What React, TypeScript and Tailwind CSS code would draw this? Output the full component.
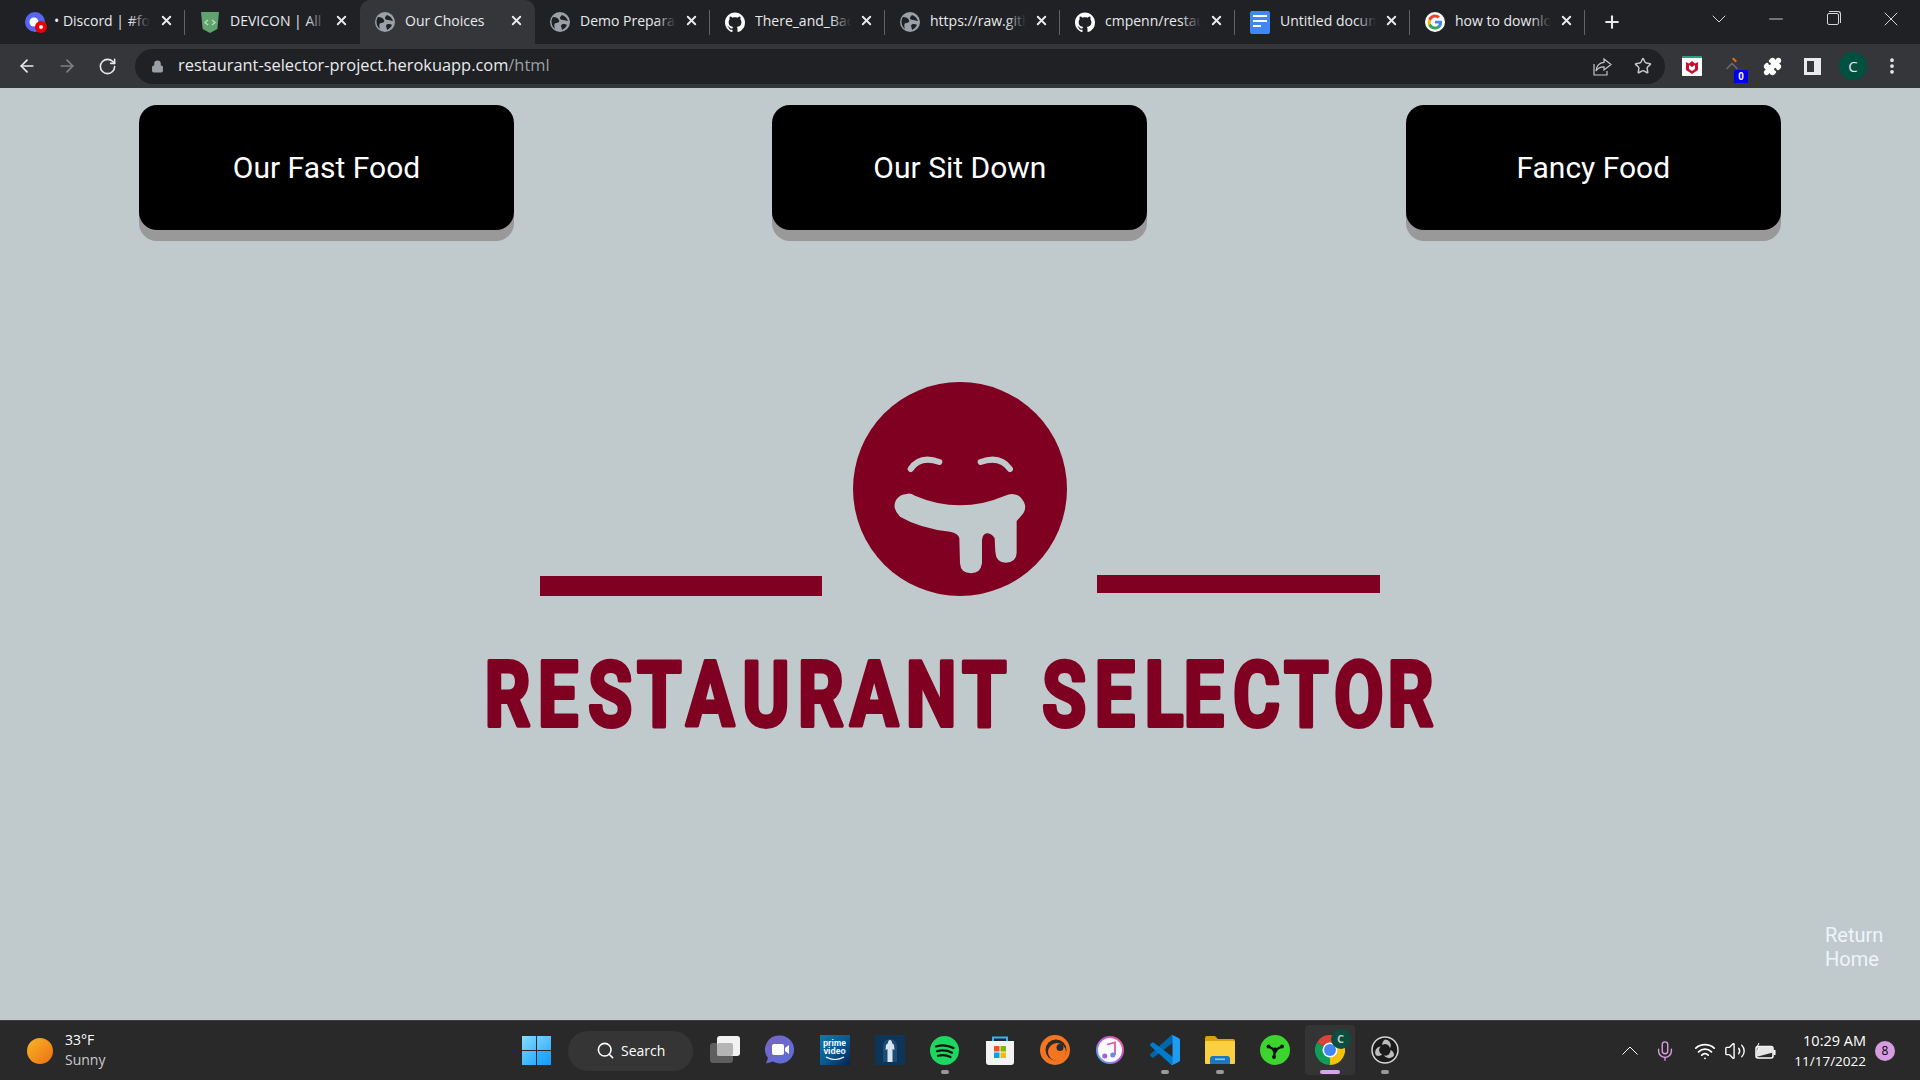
import type { ReactNode } from "react";
import { ArrowLeft, ArrowRight, RotateCw, Lock, Star, Puzzle, X, Plus, ChevronDown, ChevronUp, Minus, Search, Mic, Wifi, Volume2, EllipsisVertical } from "lucide-react";

const ui = "font-['Open_Sans',sans-serif]";

function Globe() {
  return (
    <svg width="20" height="20" viewBox="0 0 20 20">
      <circle cx="10" cy="10" r="10" fill="#9aa0a6" />
      <path d="M3 5c3 0 5 1 6 3s-1 3-3 3-2 3-1 6C2 15 0 9 3 5zM12 3c3 1 5 3 6 6-2 0-3-1-5-1s-3-1-3-2 1-2 2-3zM13 12c2 0 3 0 4 1-1 2-3 4-5 5 0-2-1-3-1-4s1-2 2-2z" fill="#202124" />
    </svg>
  );
}

function Github() {
  return (
    <svg width="21" height="21" viewBox="0 0 16 16" fill="#fff">
      <path d="M8 0C3.58 0 0 3.58 0 8c0 3.54 2.29 6.53 5.47 7.59.4.07.55-.17.55-.38 0-.19-.01-.82-.01-1.49-2.01.37-2.53-.49-2.69-.94-.09-.23-.48-.94-.82-1.13-.28-.15-.68-.52-.01-.53.63-.01 1.08.58 1.23.82.72 1.21 1.87.87 2.33.66.07-.52.28-.87.51-1.07-1.78-.2-3.64-.89-3.64-3.95 0-.87.31-1.59.82-2.15-.08-.2-.36-1.02.08-2.12 0 0 .67-.21 2.2.82.64-.18 1.32-.27 2-.27s1.36.09 2 .27c1.53-1.04 2.2-.82 2.2-.82.44 1.1.16 1.92.08 2.12.51.56.82 1.27.82 2.15 0 3.07-1.87 3.75-3.65 3.95.29.25.54.73.54 1.48 0 1.07-.01 1.93-.01 2.2 0 .21.15.46.55.38A8.01 8.01 0 0 0 16 8c0-4.42-3.58-8-8-8z" />
    </svg>
  );
}

function GoogleG() {
  return (
    <svg width="20" height="20" viewBox="0 0 48 48">
      <circle cx="24" cy="24" r="24" fill="#fff" />
      <path fill="#4285f4" d="M41 24.500c0-1.300-.1-2.500-.3-3.700H24v7h9.600c-.4 2.200-1.700 4.100-3.500 5.400v4.500h5.700c3.300-3.100 5.200-7.600 5.200-13.200z" />
      <path fill="#34a853" d="M24 42c4.700 0 8.700-1.600 11.700-4.300l-5.700-4.400c-1.600 1.100-3.600 1.700-6 1.700-4.600 0-8.500-3.100-9.900-7.300H8.200v4.600C11.100 38 17.100 42 24 42z" />
      <path fill="#fbbc05" d="M14.100 27.700c-.7-2.200-.7-4.600 0-6.800v-4.600H8.200a18 18 0 0 0 0 16z" />
      <path fill="#ea4335" d="M24 13.200c2.600 0 4.900.9 6.700 2.600l5-5C32.700 7.900 28.700 6 24 6 17.100 6 11.100 10 8.200 16.300l5.900 4.600c1.400-4.200 5.300-7.700 9.900-7.700z" />
    </svg>
  );
}

function Discord() {
  return (
    <div className="relative w-5 h-5">
      <svg width="20" height="20" viewBox="0 0 20 20">
        <circle cx="10" cy="10" r="10" fill="#5865f2" />
        <circle cx="9" cy="10" r="4.500" fill="#fff" />
      </svg>
      <span className="absolute right-[-2px] bottom-[-1px] w-3 h-3 rounded-full bg-[#e00] flex items-center justify-center">
        <span className="w-1 h-1 rounded-full bg-white" />
      </span>
    </div>
  );
}

function Devicon() {
  return (
    <svg width="20" height="21" viewBox="0 0 20 21">
      <path d="M1 0h18l-1.600 17L10 21l-7.400-4z" fill="#60a36f" />
      <path d="M8 8l-3 2.500L8 13M12 8l3 2.500L12 13" stroke="#b9dcc0" strokeWidth="1.400" fill="none" />
    </svg>
  );
}

function Docs() {
  return (
    <div className="w-5 h-[23px] rounded-[2px] bg-[#4285f4] flex flex-col gap-[3px] px-[3px] pt-1">
      <span className="h-[2px] bg-white" />
      <span className="h-[2px] bg-white" />
      <span className="h-[2px] w-2 bg-white" />
    </div>
  );
}

const tabs = [
  { title: "• Discord | #fo", icon: <Discord />, first: true },
  { title: "DEVICON | All", icon: <Devicon /> },
  { title: "Our Choices", icon: <Globe />, active: true },
  { title: "Demo Prepara", icon: <Globe /> },
  { title: "There_and_Back", icon: <Github /> },
  { title: "https://raw.gith", icon: <Globe /> },
  { title: "cmpenn/restau", icon: <Github /> },
  { title: "Untitled docum", icon: <Docs /> },
  { title: "how to downlo", icon: <GoogleG /> },
];

function TabBar() {
  return (
    <div className="h-[44px] bg-[#202124] flex items-stretch pl-[10px] text-[#e8eaed]">
      {tabs.map((t, i) => (
        <div
          key={t.title}
          className={
            t.active
              ? "relative w-[175px] flex items-center pl-[15px] bg-[#35363a] rounded-t-[10px]"
              : "relative w-[175px] flex items-center pl-[15px]"
          }
        >
          <div className="w-5 flex justify-center shrink-0">{t.icon}</div>
          <div className={`relative w-[96px] -mt-[3px] overflow-hidden whitespace-nowrap text-[14px] ${t.first ? "ml-[9px]" : "ml-[10px]"} ${ui}`}>
            {t.title}
            {!t.active && (
              <span className="absolute right-0 top-0 bottom-0 w-5 bg-gradient-to-r from-transparent to-[#202124]" />
            )}
          </div>
          <X size={15} strokeWidth={3} className="absolute left-[149px] top-[13px] text-[#e8eaed]" />
          {i !== 1 && i !== 2 && (
            <span className="absolute right-0 top-[10px] h-[25px] w-px bg-[#5f6368]" />
          )}
        </div>
      ))}
      <div className="ml-[17px] flex items-center">
        <Plus size={20} strokeWidth={2.5} />
      </div>
      <div className="ml-auto flex items-center text-[#d5d6d8]">
        <ChevronDown size={24} strokeWidth={1} className="mr-[34px] -mt-[6px]" />
        <Minus size={22} strokeWidth={1} className="mr-[40px] -mt-[6px]" />
        <div className="relative w-[12px] h-[12px] border border-[#d5d6d8] rounded-[2px] mr-[40px] -mt-[6px]">
          <span className="absolute -top-[3px] left-[1px] w-[12px] h-[12px] border-t border-r border-[#d5d6d8] rounded-tr-[3px]" />
        </div>
        <X size={24} strokeWidth={1} className="mr-[17px] -mt-[6px]" />
      </div>
    </div>
  );
}

function ToolBar() {
  return (
    <div className="h-[44px] bg-[#35363a] flex items-center text-[#e8eaed]">
      <div className="w-[135px] flex items-center pl-[17px] gap-[20px]">
        <ArrowLeft size={20} />
        <ArrowRight size={20} className="text-[#7d8084]" />
        <RotateCw size={19} className="ml-[1px]" />
      </div>
      <div className="w-[1530px] h-[35px] rounded-full bg-[#202124] flex items-center pl-[16px] pr-[13px]">
        <Lock size={13} fill="#9aa0a6" className="text-[#9aa0a6]" />
        <div className={`ml-[14px] -mt-[1px] text-[16.4px] ${ui}`}>
          restaurant-selector-project.herokuapp.com<span className="text-[#9aa0a6]">/html</span>
        </div>
        <div className="ml-auto flex items-center gap-[22px] text-[#c4c7c5]">
          <svg width="19" height="19" viewBox="0 0 19 19" fill="none" stroke="currentColor" strokeWidth="1.200">
            <path d="M1 7v11h13v-4" />
            <path d="M11 2l7 5.500-7 5.500V9.800C7 9.800 4.500 11 3 14c.5-5 3.500-8.200 8-8.600z" />
          </svg>
          <Star size={18} />
        </div>
      </div>
      <div className="flex-1 flex items-center pl-[17px] relative">
        <div className="w-5 h-5 bg-white border-t-2 border-[#2e9f7f] flex items-center justify-center rounded-[1px]">
          <svg width="12" height="13" viewBox="0 0 12 13">
            <path d="M0 1l3 1.500L6 0l3 2.500L12 1v8l-6 4-6-4z" fill="#c8102e" />
            <path d="M3 4l3 2 3-2v4l-3 2-3-2z" fill="#fff" />
          </svg>
        </div>
        <div className="relative w-5 h-5 ml-[20px]">
          <ChevronUp size={20} className="text-[#6a6c70]" />
          <span className="absolute left-[10px] top-[3px] w-[5px] h-[2px] rotate-45 bg-[#e8681e]" />
          <span className="absolute right-[-6px] bottom-[-7px] w-[14px] h-[13px] bg-[#0000ee] text-white text-[10px] font-bold text-center leading-[13px] font-['Liberation_Sans',sans-serif]">0</span>
        </div>
        <Puzzle size={19} fill="#fff" className="ml-[21px] text-white" />
        <div className="ml-[22px] w-[17px] h-[17px] border-[3px] border-r-[7px] border-[#e8eaed]" />
        <div className={`ml-[18px] w-7 h-7 rounded-full bg-[#00503f] flex items-center justify-center text-[15px] ${ui}`}>C</div>
        <EllipsisVertical size={20} strokeWidth={2.5} className="ml-[15px]" />
      </div>
    </div>
  );
}

function FoodButton({ label }: { label: string }) {
  return (
    <button className="w-[375px] h-[125px] rounded-[18px] bg-black text-white text-[30px] shadow-[0_11px_0_0_#999] font-['Roboto',sans-serif]">
      {label}
    </button>
  );
}

const maroon = "#7f0020";
const paper = "#c0c9cc";
const squeeze = 0.8;
// where each letter of the wordmark starts, measured off the picture
const letterX = [484.6, 537.6, 588, 637, 686, 742.4, 797.6, 850, 905.6, 962, 1000, 1042, 1094.6, 1144.6, 1183.6, 1233, 1284, 1334, 1387.6]
  .map((x) => ((x - 487) / squeeze).toFixed(1))
  .join(" ");

function Logo() {
  return (
    <svg width="950" height="352" viewBox="0 0 950 352" className="block">
      <circle cx="473" cy="107" r="107" fill={maroon} />
      <rect x="53" y="194" width="282" height="20" fill={maroon} />
      <rect x="610" y="193" width="283" height="18" fill={maroon} />
      <g transform="translate(383 58) scale(0.3333)">
        <path d="M122 87Q150 45 208 66M332 66Q390 45 420 87" stroke={paper} strokeWidth="18" strokeLinecap="round" fill="none" />
        <path
          d="M110 162Q120 158 135 167Q270 225 405 167Q430 155 450 170Q475 195 460 220Q448 235 440 243L440 340Q438 368 408 368Q378 368 376 335L374 295Q365 280 350 280Q338 282 336 300L336 370Q332 400 303 400Q272 400 270 370L268 295Q265 280 240 275Q150 265 90 230Q65 205 78 180Q90 162 110 162Z"
          fill={paper}
        />
      </g>
      <text
        transform={`scale(${squeeze} 1)`}
        x={letterX}
        y="344"
        fill={maroon}
        stroke={maroon}
        strokeWidth="4"
        strokeLinejoin="round"
        fontFamily="Roboto, sans-serif"
        fontWeight="700"
        fontSize="90"
      >
        RESTAURANT SELECTOR
      </text>
    </svg>
  );
}

function Page() {
  return (
    <main className="relative flex-1 bg-[#c0c9cc]">
      <div className="pt-[17px] pl-[139px] flex gap-[258.4px]">
        <FoodButton label="Our Fast Food" />
        <FoodButton label="Our Sit Down" />
        <FoodButton label="Fancy Food" />
      </div>
      <div className="mt-[152px] pl-[4px] flex justify-center">
        <Logo />
      </div>
      <a className="absolute left-[1825px] top-[835px] w-[70px] text-[20px] leading-[24px] text-[#edf5fc] font-['Roboto',sans-serif]">
        Return Home
      </a>
    </main>
  );
}

function TaskIcon({ children, mark, active }: { children: ReactNode; mark?: boolean; active?: boolean }) {
  return (
    <div className="relative w-[55px] h-[50px] flex items-center justify-center">
      {active && <span className="absolute left-[2.5px] top-0 w-[50px] h-[50px] rounded-[4px] bg-[#343434]" />}
      <div className="relative flex items-center justify-center">{children}</div>
      {mark && <span className="absolute left-[23.5px] bottom-[1px] w-2 h-1 rounded-full bg-[#9a9a9a]" />}
      {active && <span className="absolute left-[17.5px] bottom-[1px] w-5 h-1 rounded-full bg-[#d9a5e6]" />}
    </div>
  );
}

function TaskView() {
  return (
    <div className="relative w-[30px] h-[28px]">
      <span className="absolute left-0 top-[7px] w-[23px] h-[20px] rounded-[3px] bg-[#5e5e5e]" />
      <span className="absolute left-[7px] top-0 w-[23px] h-[20px] rounded-[3px] bg-[#f2f2f2]" />
      <span className="absolute left-[7px] top-[7px] w-[16px] h-[13px] rounded-[2px] bg-[#b5b5b5]" />
    </div>
  );
}

function TeamsChat() {
  return (
    <svg width="30" height="30" viewBox="0 0 30 30">
      <defs>
        <linearGradient id="chat" x1="0" y1="0" x2="1" y2="1">
          <stop offset="0" stopColor="#7b63c6" />
          <stop offset="1" stopColor="#5a6fd8" />
        </linearGradient>
      </defs>
      <path d="M15 .5A14 14 0 1 1 8 26.600L1 28.500l2-5.500A14 14 0 0 1 15 .5z" fill="url(#chat)" />
      <rect x="7" y="9" width="12" height="11" rx="2" fill="#fff" />
      <path d="M20 13l4-3v9l-4-3z" fill="#fff" />
    </svg>
  );
}

function PrimeVideo() {
  return (
    <div className="w-[30px] h-[30px] bg-gradient-to-br from-[#0f79af] via-[#0b5a94] to-[#06244f] flex flex-col items-center pt-[4px] text-white font-bold text-[8.5px] leading-[8px] font-['Liberation_Sans',sans-serif]">
      <span>prime</span>
      <span>video</span>
      <svg width="20" height="6" viewBox="0 0 20 6" className="mt-[1px]">
        <path d="M1 1q9 5 18 0" stroke="#fff" strokeWidth="1.200" fill="none" />
      </svg>
    </div>
  );
}

function Church() {
  return (
    <svg width="30" height="30" viewBox="0 0 30 30">
      <rect width="30" height="30" fill="#0c3558" />
      <path d="M8 27V11a7 7 0 0 1 14 0v16" fill="#1c4c76" />
      <path d="M15 5c1.500 0 2 1.500 2 3l2 2 .5 5-2-1v13h-5V14l-2 1 .5-5 2-2c0-1.500.5-3 2-3z" fill="#d8e4ee" />
    </svg>
  );
}

function Spotify() {
  return (
    <svg width="29" height="29" viewBox="0 0 29 29">
      <circle cx="14.500" cy="14.500" r="14.500" fill="#1ed760" />
      <path d="M6 10.500Q15 7.500 23.500 12M7 15.200Q15 13 22 16.700M8 19.700Q15 18 20.500 21" stroke="#111" strokeWidth="2.200" strokeLinecap="round" fill="none" />
    </svg>
  );
}

function Store() {
  return (
    <svg width="30" height="30" viewBox="0 0 30 30">
      <path d="M8 7V2.500h14V7" stroke="#33b5ee" strokeWidth="2" fill="none" />
      <path d="M1 6h28v21a3 3 0 0 1-3 3H4a3 3 0 0 1-3-3z" fill="#f3f3f3" />
      <rect x="9" y="11" width="5.500" height="5.500" fill="#f25022" />
      <rect x="15.500" y="11" width="5.500" height="5.500" fill="#7fba00" />
      <rect x="9" y="17.500" width="5.500" height="5.500" fill="#00a4ef" />
      <rect x="15.500" y="17.500" width="5.500" height="5.500" fill="#ffb900" />
    </svg>
  );
}

function Crunchyroll() {
  return (
    <svg width="30" height="30" viewBox="0 0 30 30">
      <circle cx="15" cy="15" r="15" fill="#f47521" />
      <circle cx="16" cy="15" r="10.500" fill="#2b2b2b" />
      <circle cx="17" cy="17" r="9" fill="#f47521" />
      <circle cx="20" cy="12.500" r="3.500" fill="#2b2b2b" />
    </svg>
  );
}

function Itunes() {
  return (
    <svg width="28" height="28" viewBox="0 0 28 28">
      <defs>
        <linearGradient id="ring" x1="1" y1="0" x2="0" y2="1">
          <stop offset="0" stopColor="#f45a8d" />
          <stop offset="0.5" stopColor="#b65de0" />
          <stop offset="1" stopColor="#3fb7f0" />
        </linearGradient>
      </defs>
      <circle cx="14" cy="14" r="13" fill="#fafafa" stroke="url(#ring)" strokeWidth="2" />
      <path d="M11 8.500l8-2v12.500" stroke="url(#ring)" strokeWidth="1.800" fill="none" />
      <path d="M11 8.500V20" stroke="url(#ring)" strokeWidth="1.800" fill="none" />
      <circle cx="8.800" cy="20" r="2.500" fill="#9d62e0" />
      <circle cx="16.800" cy="19" r="2.500" fill="#5f8de8" />
    </svg>
  );
}

function VsCode() {
  return (
    <svg width="30" height="30" viewBox="0 0 100 100">
      <path fill="#0065a9" d="M96.500 10.800 75.900.9a6.200 6.200 0 0 0-7.100 1.200L1.400 63.600a4.200 4.200 0 0 0 0 6.100l5.500 5a4.200 4.200 0 0 0 5.300.3L93.400 13.600c2.700-2.100 6.600-.2 6.600 3.300v-.2a6.200 6.200 0 0 0-3.500-5.900z" />
      <path fill="#007acc" d="M96.500 89.200 75.900 99.100a6.200 6.200 0 0 1-7.100-1.200L1.400 36.400a4.200 4.200 0 0 1 0-6.100l5.500-5a4.200 4.200 0 0 1 5.300-.3l81.200 61.400c2.700 2.100 6.600.2 6.600-3.300v.2a6.200 6.200 0 0 1-3.500 5.900z" />
      <path fill="#1f9cf0" d="M75.900 99.100a6.200 6.200 0 0 1-7.100-1.200c2.300 2.300 6.200.7 6.200-2.600V4.700c0-3.300-3.900-4.900-6.200-2.600a6.200 6.200 0 0 1 7.100-1.200l20.600 9.900a6.200 6.200 0 0 1 3.500 5.600v67.200a6.200 6.200 0 0 1-3.500 5.600z" />
    </svg>
  );
}

function Explorer() {
  return (
    <svg width="30" height="28" viewBox="0 0 30 28">
      <path d="M0 2a2 2 0 0 1 2-2h8l3 3h15a2 2 0 0 1 2 2v4H0z" fill="#d9a20b" />
      <rect y="5" width="30" height="23" rx="1" fill="#fbcf3f" />
      <path d="M5 28v-5a3 3 0 0 1 3-3h14a3 3 0 0 1 3 3v5z" fill="#1a78c2" />
      <rect x="10" y="22.500" width="10" height="1.500" fill="#8cc8f0" />
    </svg>
  );
}

function GreenApp() {
  return (
    <svg width="30" height="30" viewBox="0 0 30 30">
      <circle cx="15" cy="15" r="15" fill="#3dd42f" />
      <path d="M15 15L8.500 11.500M15 15L22 11.500M15 15L14 22" stroke="#111" strokeWidth="2.400" strokeLinecap="round" />
      <circle cx="15" cy="15" r="2.600" fill="#111" />
      <circle cx="8.500" cy="11.500" r="1.900" fill="#111" />
      <circle cx="22" cy="11.500" r="1.900" fill="#111" />
      <circle cx="14" cy="22" r="1.900" fill="#111" />
    </svg>
  );
}

function Chrome() {
  return (
    <div className="relative w-[30px] h-[30px]">
      <svg width="30" height="30" viewBox="0 0 30 30">
        <path d="M15 15L2 7.500A15 15 0 0 1 28 7.500Z" fill="#db4437" />
        <path d="M15 15L28 7.500A15 15 0 0 1 15 30Z" fill="#f4c20d" />
        <path d="M15 15L15 30A15 15 0 0 1 2 7.500Z" fill="#0f9d58" />
        <circle cx="15" cy="15" r="7.500" fill="#fff" />
        <circle cx="15" cy="15" r="6" fill="#4285f4" />
      </svg>
      <span className={`absolute left-[16px] -top-[6px] w-5 h-5 rounded-full bg-[#0b4d3e] text-[#b9d0c8] text-[11px] font-bold flex items-center justify-center ${ui}`}>C</span>
    </div>
  );
}

function Obs() {
  const blade = "M14 3.500a5.800 5.800 0 0 1 5 8.700 4.600 4.600 0 0 0-7.600-2.900 5.800 5.800 0 0 1 2.600-5.800z";
  return (
    <svg width="28" height="28" viewBox="0 0 28 28">
      <circle cx="14" cy="14" r="13" fill="#1b1b1b" stroke="#d6d6d6" strokeWidth="1.500" />
      <path d={blade} fill="#bdbdbd" />
      <path d={blade} fill="#bdbdbd" transform="rotate(120 14 14)" />
      <path d={blade} fill="#bdbdbd" transform="rotate(240 14 14)" />
    </svg>
  );
}

function Tray() {
  return (
    <div className="ml-auto pr-[25px] flex items-center">
      <div className="w-[30px] flex justify-center">
        <svg width="16" height="9" viewBox="0 0 16 9" fill="none" stroke="#fff" strokeWidth="1">
          <path d="M.5 8.500L8 1l7.500 7.500" />
        </svg>
      </div>
      <div className="w-[40px] flex justify-center">
        <Mic size={22} strokeWidth={1.5} className="text-[#d7a0e0]" />
      </div>
      <div className="ml-[5px] w-[30px] flex justify-center">
        <Wifi size={22} strokeWidth={2} />
      </div>
      <div className="w-[30px] flex justify-center">
        <Volume2 size={22} strokeWidth={1.5} />
      </div>
      <div className="w-[30px] flex justify-center">
        <svg width="21" height="16" viewBox="0 0 21 16">
          <rect x="1" y="3.500" width="17" height="11.500" rx="2" fill="none" stroke="#fff" strokeWidth="1.500" />
          <path d="M1 9l3-5.500h12l2 1v5L1 14z" fill="#e6e6e6" />
          <rect x="18.500" y="7" width="2" height="5" fill="#fff" />
          <path d="M4 0L1.500 5H4l-1 3" stroke="#fff" fill="none" />
        </svg>
      </div>
      <div className={`w-[86px] text-right text-[13.5px] leading-[20px] ${ui}`}>
        <div className="text-[14.5px]">10:29 AM</div>
        <div>11/17/2022</div>
      </div>
      <span className={`ml-[9px] w-5 h-5 rounded-full bg-[#d79ce0] text-black text-[12px] flex items-center justify-center ${ui}`}>8</span>
    </div>
  );
}

function TaskBar() {
  return (
    <div className="h-[60px] bg-[#292929] border-t border-[#3d3d3d] flex items-center text-white">
      <div className="w-[522px] pl-[27px] flex items-center gap-[12px]">
        <div className="w-[26px] h-[26px] rounded-full bg-gradient-to-br from-[#f4b62a] to-[#ee6d0c]" />
        <div className={`-mt-[2px] text-[14px] leading-[20px] ${ui}`}>
          <div>33°F</div>
          <div className="text-[#c9c9c9]">Sunny</div>
        </div>
      </div>
      <div className="w-[29px] h-[29px] grid grid-cols-2 gap-px">
        <span className="bg-gradient-to-br from-[#86dcff] to-[#4cbcfa]" />
        <span className="bg-gradient-to-br from-[#6fd0ff] to-[#3ab3fb]" />
        <span className="bg-gradient-to-br from-[#5ccaff] to-[#2aabfc]" />
        <span className="bg-gradient-to-br from-[#35b4fd] to-[#129cff]" />
      </div>
      <div className={`ml-[17px] w-[125px] h-[40px] rounded-full bg-[#353535] flex items-center pl-[28px] gap-[6px] text-[14px] ${ui}`}>
        <Search size={19} strokeWidth={2} />
        Search
      </div>
      <div className="ml-[4px] -mt-[1px] flex items-center">
        <TaskIcon><TaskView /></TaskIcon>
        <TaskIcon><TeamsChat /></TaskIcon>
        <TaskIcon><PrimeVideo /></TaskIcon>
        <TaskIcon><Church /></TaskIcon>
        <TaskIcon mark><Spotify /></TaskIcon>
        <TaskIcon><Store /></TaskIcon>
        <TaskIcon><Crunchyroll /></TaskIcon>
        <TaskIcon><Itunes /></TaskIcon>
        <TaskIcon mark><VsCode /></TaskIcon>
        <TaskIcon mark><Explorer /></TaskIcon>
        <TaskIcon><GreenApp /></TaskIcon>
        <TaskIcon active><Chrome /></TaskIcon>
        <TaskIcon mark><Obs /></TaskIcon>
      </div>
      <Tray />
    </div>
  );
}

export default function App() {
  return (
    <div className="w-[1920px] h-[1080px] flex flex-col overflow-hidden">
      <TabBar />
      <ToolBar />
      <Page />
      <TaskBar />
    </div>
  );
}
